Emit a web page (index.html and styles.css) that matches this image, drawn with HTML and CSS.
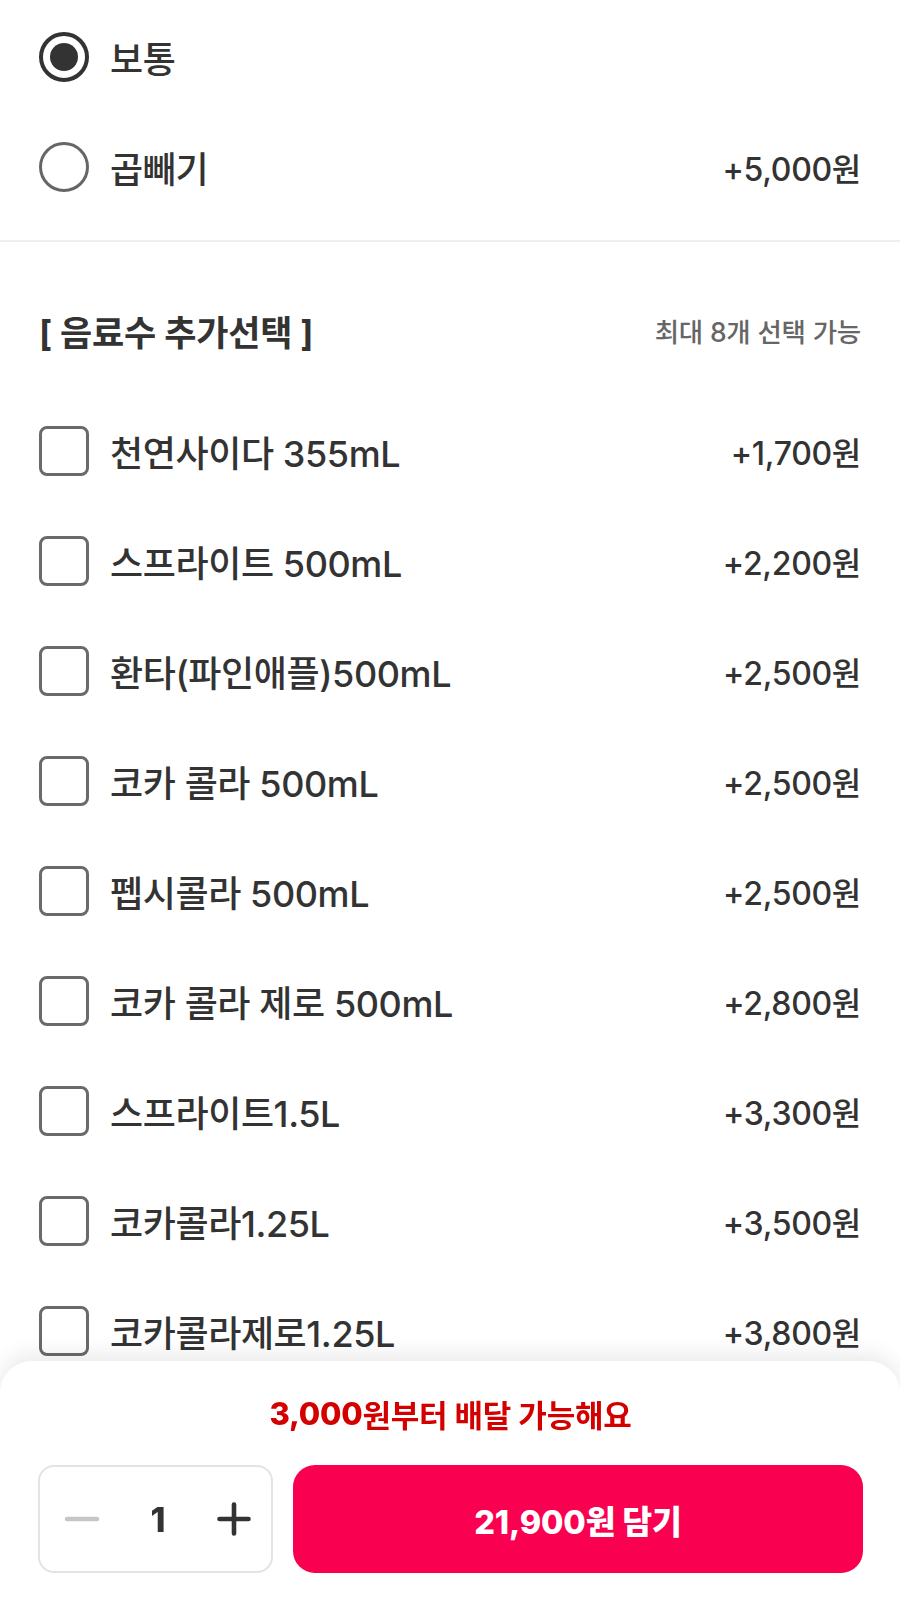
FILE: index.html
```html
<!DOCTYPE html>
<html lang="ko">
<head>
<meta charset="utf-8">
<title>옵션 선택</title>
<link rel="stylesheet" href="styles.css">
</head>
<body>
<main class="page">
  <section class="group group-size">
    <div class="row">
      <span class="radio radio-on"><span class="dot"></span></span>
      <span class="label">보통</span>
    </div>
    <div class="row">
      <span class="radio"></span>
      <span class="label">곱빼기</span>
      <span class="price">+5,000원</span>
    </div>
  </section>

  <div class="divider"></div>

  <section class="group group-drink">
    <div class="group-head">
      <h2 class="group-title">[ 음료수 추가선택 ]</h2>
      <span class="group-note">최대 8개 선택 가능</span>
    </div>
    <div class="row"><span class="check"></span><span class="label">천연사이다 355mL</span><span class="price">+1,700원</span></div>
    <div class="row"><span class="check"></span><span class="label">스프라이트 500mL</span><span class="price">+2,200원</span></div>
    <div class="row"><span class="check"></span><span class="label">환타(파인애플)500mL</span><span class="price">+2,500원</span></div>
    <div class="row"><span class="check"></span><span class="label">코카 콜라 500mL</span><span class="price">+2,500원</span></div>
    <div class="row"><span class="check"></span><span class="label">펩시콜라 500mL</span><span class="price">+2,500원</span></div>
    <div class="row"><span class="check"></span><span class="label">코카 콜라 제로 500mL</span><span class="price">+2,800원</span></div>
    <div class="row"><span class="check"></span><span class="label">스프라이트1.5L</span><span class="price">+3,300원</span></div>
    <div class="row"><span class="check"></span><span class="label">코카콜라1.25L</span><span class="price">+3,500원</span></div>
    <div class="row"><span class="check"></span><span class="label">코카콜라제로1.25L</span><span class="price">+3,800원</span></div>
  </section>
</main>

<footer class="sheet">
  <p class="min-order"><b>3,000</b>원부터 배달 가능해요</p>
  <div class="actions">
    <div class="stepper">
      <span class="step step-minus" aria-label="빼기">
        <svg width="36" height="6" viewBox="0 0 36 6"><line x1="3" y1="3" x2="33" y2="3" stroke="#c6c6c6" stroke-width="4.5" stroke-linecap="round"/></svg>
      </span>
      <span class="qty">1</span>
      <span class="step step-plus" aria-label="더하기">
        <svg width="34" height="34" viewBox="0 0 34 34"><path d="M17 2.5V31.5M2.5 17H31.5" stroke="#333" stroke-width="4.6" stroke-linecap="round" fill="none"/></svg>
      </span>
    </div>
    <button class="add-btn">21,900원 담기</button>
  </div>
</footer>
</body>
</html>
```

FILE: styles.css
```css
* { box-sizing: border-box; }

html, body {
  margin: 0;
  padding: 0;
  background: #ffffff;
}

body {
  font-family: Inter, "Noto Sans CJK KR", "Noto Sans", sans-serif;
  color: #333333;
  width: 900px;
}

.page {
  padding-bottom: 260px;
}

.group {
  padding: 0 39px 0 39px;
}

.group-size {
  padding-top: 2px;
  padding-bottom: 18px;
}

.row {
  display: flex;
  align-items: center;
  height: 110px;
}

.label {
  margin-left: 21px;
  font-size: 36px;
  font-weight: 500;
  letter-spacing: -0.4px;
  flex: 1;
  white-space: nowrap;
}

.price {
  font-size: 32px;
  font-weight: 500;
  letter-spacing: -0.3px;
  white-space: nowrap;
}

.radio {
  width: 50px;
  height: 50px;
  flex: 0 0 50px;
  border-radius: 50%;
  border: 3.5px solid #666666;
  display: flex;
  align-items: center;
  justify-content: center;
}

.radio-on {
  border: 4.5px solid #333333;
}

.radio-on .dot {
  width: 28px;
  height: 28px;
  border-radius: 50%;
  background: #333333;
}

.check {
  width: 50px;
  height: 50px;
  flex: 0 0 50px;
  border: 3.5px solid #6a6a6a;
  border-radius: 8px;
}

.divider {
  height: 2px;
  background: #eeeeee;
}

.group-drink {
  padding-top: 58px;
}

.group-head {
  display: flex;
  align-items: center;
  justify-content: space-between;
  height: 60px;
  margin-bottom: 36px;
}

.group-title {
  margin: 0;
  font-size: 35px;
  font-weight: 700;
  letter-spacing: -0.2px;
  color: #333333;
}

.group-note {
  font-size: 26.5px;
  font-weight: 500;
  color: #666666;
  letter-spacing: -0.2px;
}

.sheet {
  position: fixed;
  left: 0;
  right: 0;
  bottom: 0;
  height: 250px;
  background: #ffffff;
  border-radius: 32px 32px 0 0;
  box-shadow: 0 -6px 22px rgba(0, 0, 0, 0.09);
  padding: 0 37px 38px 38px;
  display: flex;
  flex-direction: column;
}

.min-order {
  margin: 0;
  height: 104px;
  display: flex;
  align-items: center;
  justify-content: center;
  font-size: 31px;
  font-weight: 700;
  color: #d40000;
  letter-spacing: -0.2px;
  white-space: pre;
}

.min-order b {
  font-weight: 800;
}

.actions {
  display: flex;
  gap: 20px;
  height: 108px;
}

.stepper {
  width: 235px;
  flex: 0 0 235px;
  border: 2px solid #e3e3e3;
  border-radius: 16px;
  display: flex;
  align-items: center;
  justify-content: space-between;
  padding: 0 18px 0 23px;
}

.step {
  display: flex;
  align-items: center;
  justify-content: center;
  width: 38px;
  height: 38px;
}

.qty {
  font-size: 34px;
  font-weight: 800;
  color: #333333;
}

.add-btn {
  flex: 1;
  border: none;
  border-radius: 22px;
  background: #fa0050;
  color: #ffffff;
  font-family: inherit;
  font-size: 32.5px;
  font-weight: 800;
  letter-spacing: -0.2px;
  padding: 0;
}
```
